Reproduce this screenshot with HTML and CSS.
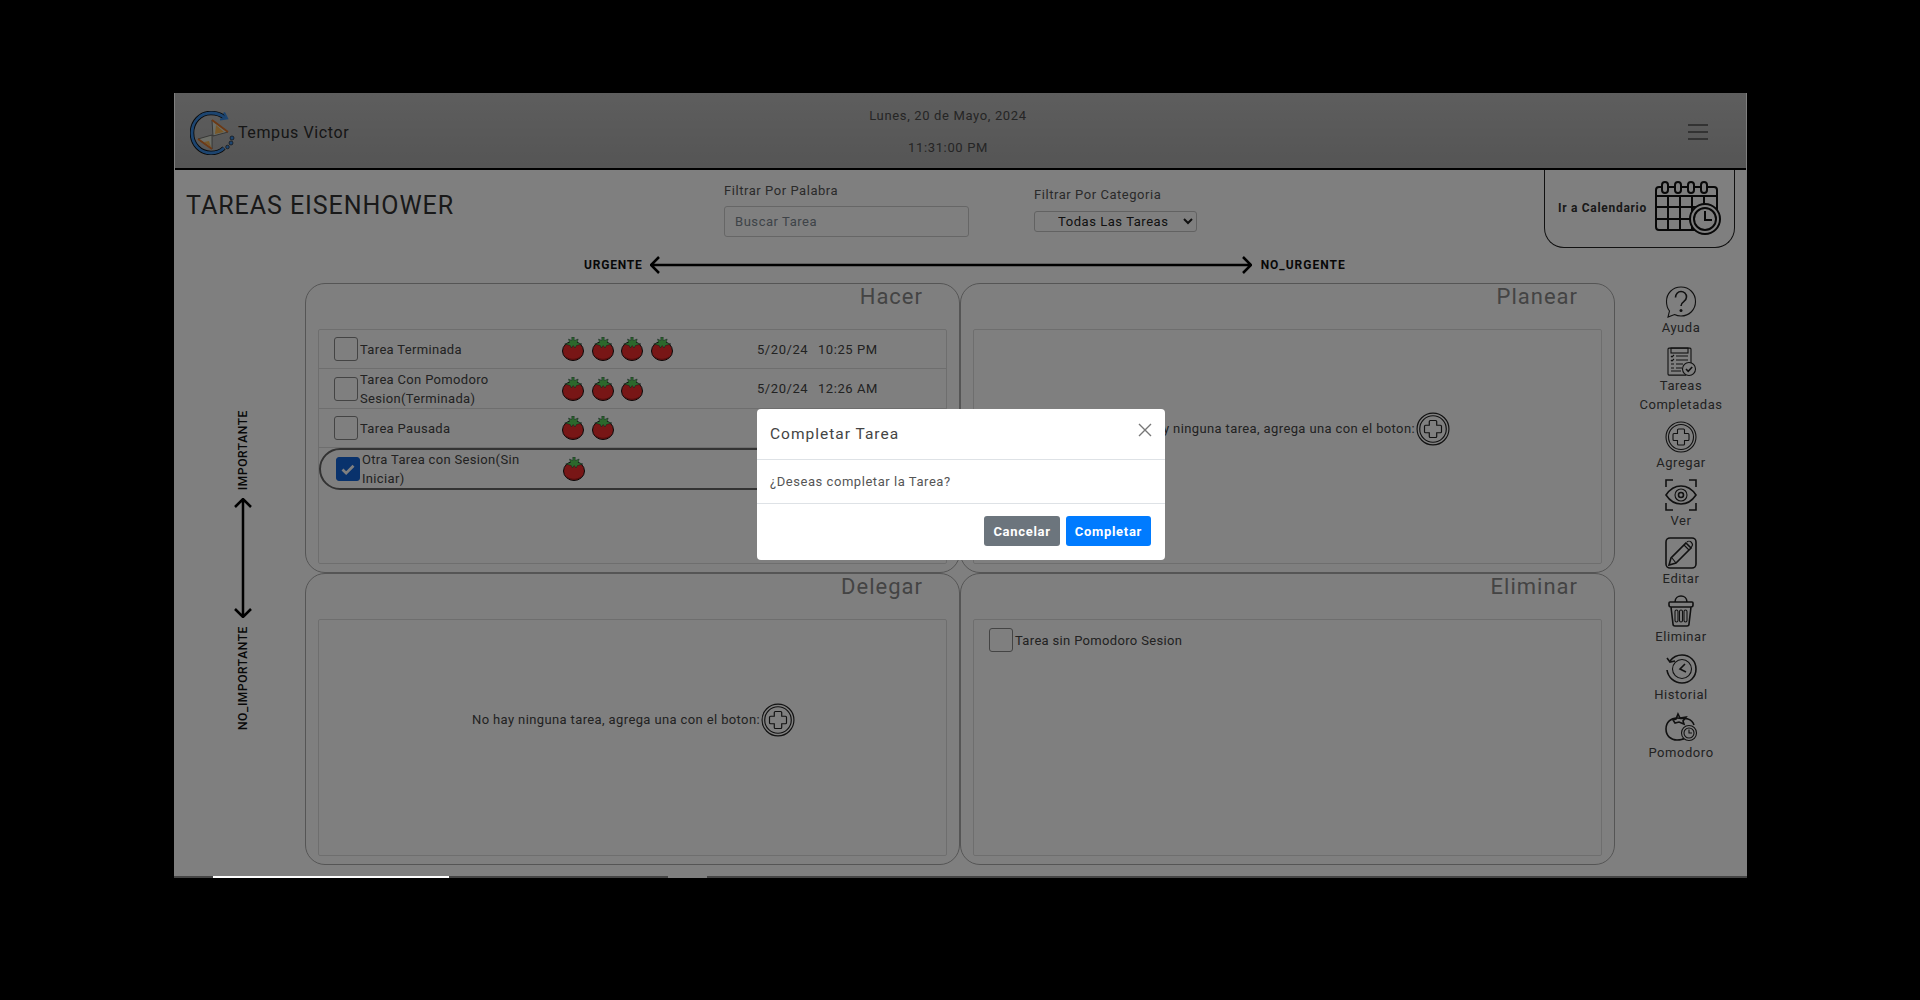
FILE: index.html
```html
<!DOCTYPE html>
<html lang="es">
<head>
<meta charset="utf-8">
<title>Tempus Victor</title>
<link rel="stylesheet" href="styles.css">
</head>
<body>

<svg class="defs" width="0" height="0">
 <symbol id="tomato" viewBox="0 0 22 24">
  <ellipse class="tomato-body" cx="11" cy="14" rx="10.500" ry="9.500"/>
  <path class="tomato-shade" d="M4 20c4 3 10 3 14 0"/>
  <path class="tomato-leaf" d="M9.800 0h2.400v3.500l4-1.500-1 3.500 4.800 1.500-5.500 1.500-1.500 2.500-1.800-2.500-1.800 2.500-1.200-2.500-5.500-1.500 4.800-1.500-1-3.500 3.300 1.500z"/>
 </symbol>
 <symbol id="add" viewBox="0 0 32 32">
  <circle cx="16" cy="16" r="15"/>
  <circle cx="16" cy="16" r="12.5"/>
  <path d="M13.5 8h5a1 1 0 0 1 1 1v3.5H23a1 1 0 0 1 1 1v5a1 1 0 0 1-1 1h-3.500V23a1 1 0 0 1-1 1h-5a1 1 0 0 1-1-1v-3.500H9a1 1 0 0 1-1-1v-5a1 1 0 0 1 1-1h3.500V9a1 1 0 0 1 1-1z"/>
 </symbol>
</svg>

<div class="app">
 <header class="topbar">
  <div class="brand">
   <svg class="logo" viewBox="0 0 46 44">
    <path class="logo-ring-line" d="M35 7C31 3.500 26 2 21 2 10 2 2 11 2 22s8 20 19 20c6 0 10-2 13-5"/>
    <path class="logo-ring" d="M35 7C31 3.500 26 2 21 2 10 2 2 11 2 22s8 20 19 20c6 0 10-2 13-5"/>
    <path class="logo-ring-head" d="M34 1.500l3 6-7 1"/>
    <path class="logo-glass" d="M22 9l16 12-15 4zM22 24L8 28l14 10z"/>
    <path class="logo-sand" d="M26 14l8 7-9 2zM14 31l5-1 2 6z"/>
    <path class="logo-frame" d="M22 9l16 12M8 28l14 10"/>
    <circle class="logo-dot" cx="42" cy="27" r="2"/>
    <circle class="logo-dot" cx="41" cy="32" r="2"/>
    <circle class="logo-dot" cx="37.500" cy="36" r="1.800"/>
   </svg>
   <span class="brand-name">Tempus Victor</span>
  </div>
  <div class="clock">
   <p>Lunes, 20 de Mayo, 2024</p>
   <p>11:31:00 PM</p>
  </div>
  <div class="menu-wrap">
   <div class="menu-btn"><span></span><span></span><span></span></div>
  </div>
 </header>

 <section class="tools">
  <h1 class="page-title">TAREAS EISENHOWER</h1>
  <div class="filter filter-word">
   <label for="buscar">Filtrar Por Palabra</label>
   <input id="buscar" type="text" placeholder="Buscar Tarea">
  </div>
  <div class="filter filter-cat">
   <label for="categoria">Filtrar Por Categoria</label>
   <select id="categoria"><option>Todas Las Tareas</option></select>
  </div>
  <a class="calendar-link">
   <span>Ir a Calendario</span>
   <svg class="calendar-icon" viewBox="0 0 66 54">
    <path d="M5 6h54a3 3 0 0 1 3 3v26M44 49H4a3 3 0 0 1-3-3V9a3 3 0 0 1 3-3h1M1 15h61M1 26h43M1 38h36M13 15v34M25 15v34M37 15v34M49 15v12"/>
    <rect class="ring" x="7" y="1" width="6" height="11" rx="3"/>
    <rect class="ring" x="20" y="1" width="6" height="11" rx="3"/>
    <rect class="ring" x="33" y="1" width="6" height="11" rx="3"/>
    <rect class="ring" x="46" y="1" width="6" height="11" rx="3"/>
    <circle class="clock-face" cx="50" cy="38" r="15"/>
    <circle cx="50" cy="38" r="11"/>
    <path d="M50 30v9h7"/>
   </svg>
  </a>
 </section>

 <div class="urgency">
  <span>URGENTE</span>
  <svg class="arrow-h" viewBox="0 0 602 18">
   <path d="M1 9h600M9 1L1 9l8 8M593 1l8 8-8 8"/>
  </svg>
  <span>NO_URGENTE</span>
 </div>

 <div class="workspace">
  <aside class="axis">
   <span class="axis-label">IMPORTANTE</span>
   <svg class="arrow-v" viewBox="0 0 18 120">
    <path d="M9 1v118M1 9l8-8 8 8M1 111l8 8 8-8"/>
   </svg>
   <span class="axis-label">NO_IMPORTANTE</span>
  </aside>

  <main class="board">
   <section class="quad">
    <h2>Hacer</h2>
    <div class="task-list">
     <div class="task">
      <div class="task-name"><input type="checkbox"><span>Tarea Terminada</span></div>
      <div class="tomatoes">
       <svg><use href="#tomato"/></svg><svg><use href="#tomato"/></svg><svg><use href="#tomato"/></svg><svg><use href="#tomato"/></svg>
      </div>
      <span>5/20/24</span><span>10:25 PM</span>
     </div>
     <div class="task">
      <div class="task-name"><input type="checkbox"><span>Tarea Con Pomodoro Sesion(Terminada)</span></div>
      <div class="tomatoes">
       <svg><use href="#tomato"/></svg><svg><use href="#tomato"/></svg><svg><use href="#tomato"/></svg>
      </div>
      <span>5/20/24</span><span>12:26 AM</span>
     </div>
     <div class="task">
      <div class="task-name"><input type="checkbox"><span>Tarea Pausada</span></div>
      <div class="tomatoes">
       <svg><use href="#tomato"/></svg><svg><use href="#tomato"/></svg>
      </div>
      <span></span><span></span>
     </div>
     <div class="task task-selected">
      <div class="task-name"><input type="checkbox" checked><span>Otra Tarea con Sesion(Sin Iniciar)</span></div>
      <div class="tomatoes">
       <svg><use href="#tomato"/></svg>
      </div>
      <span></span><span></span>
     </div>
    </div>
   </section>

   <section class="quad">
    <h2>Planear</h2>
    <div class="task-list list-empty">
     <span>No hay ninguna tarea, agrega una con el boton:</span>
     <svg class="icon empty-add"><use href="#add"/></svg>
    </div>
   </section>

   <section class="quad">
    <h2>Delegar</h2>
    <div class="task-list list-empty">
     <span>No hay ninguna tarea, agrega una con el boton:</span>
     <svg class="icon empty-add"><use href="#add"/></svg>
    </div>
   </section>

   <section class="quad">
    <h2>Eliminar</h2>
    <div class="task-list">
     <div class="task task-plain">
      <div class="task-name task-name-wide"><input type="checkbox"><span>Tarea sin Pomodoro Sesion</span></div>
     </div>
    </div>
   </section>
  </main>

  <nav class="actions">
   <a class="action">
    <svg class="icon" viewBox="0 0 32 32">
     <path d="M16 1C24.500 1 30.500 7.500 30.500 15.500S24.500 30 16 30c-2.500 0-4.500-.5-6.500-1.500L3 31l1.500-6C2.500 22.500 1.500 19 1.500 15.500 1.500 7.500 7.500 1 16 1z"/>
     <path class="thick" d="M10.500 11.500C10.500 8 13 5.500 16 5.500s5.500 2.300 5.500 5.500c0 2.500-1.500 3.700-3 4.800-1.500 1-2.500 2-2.500 4.200"/>
     <circle class="solid" cx="16" cy="24.500" r="1.500"/>
    </svg>
    <span>Ayuda</span>
   </a>
   <a class="action">
    <svg class="icon" viewBox="0 0 32 32">
     <path d="M21 26H4a1 1 0 0 1-1-1V2a1 1 0 0 1 1-1h21a1 1 0 0 1 1 1v16" transform="translate(0 3) scale(1 1.080)"/>
     <rect x="6" y="4" width="17" height="5"/>
     <path d="M6 12l1 1 2-2M11 12h12M6 16l1 1 2-2M11 16h12M6 20h3M11 20h7M6 24h3M11 24h6M6 27h10"/>
     <circle class="face" cx="24" cy="25" r="6.500"/>
     <path class="thick" d="M21 25l2.200 2.300 4-4.300"/>
    </svg>
    <span>Tareas Completadas</span>
   </a>
   <a class="action">
    <svg class="icon"><use href="#add"/></svg>
    <span>Agregar</span>
   </a>
   <a class="action">
    <svg class="icon" viewBox="0 0 32 32">
     <path class="thick" d="M1 8V1h7M24 1h7v7M31 24v7h-7M8 31H1v-7"/>
     <path class="thick" d="M1 16C5 10 10 7 16 7s11 3 15 9c-4 6-9 9-15 9S5 22 1 16z"/>
     <circle cx="16" cy="16" r="6"/>
     <circle class="thick" cx="16" cy="16" r="2.500"/>
    </svg>
    <span>Ver</span>
   </a>
   <a class="action">
    <svg class="icon" viewBox="0 0 32 32">
     <rect class="thick" x="1" y="1" width="30" height="30" rx="4"/>
     <path class="thick" d="M21 6l5 5-15 15-7 2 2-7z"/>
     <path d="M19 8l5 5M7 21l4 5M22 5c1-1 3-1 4 0s2 3 1 4l-1 2"/>
    </svg>
    <span>Editar</span>
   </a>
   <a class="action">
    <svg class="icon" viewBox="0 0 32 32">
     <path class="thick" d="M10 7c0-8 12-8 12 0M4 10V8a1 1 0 0 1 1-1h22a1 1 0 0 1 1 1v2c0 1-1 2-2 2H6c-1 0-2-1-2-2zM6 12l2 17a2 2 0 0 0 2 2h12a2 2 0 0 0 2-2l2-17"/>
     <rect x="10" y="15" width="3" height="12" rx="1.500"/>
     <rect x="14.500" y="15" width="3" height="12" rx="1.500"/>
     <rect x="19" y="15" width="3" height="12" rx="1.500"/>
    </svg>
    <span>Eliminar</span>
   </a>
   <a class="action">
    <svg class="icon" viewBox="0 0 32 32">
     <path class="thick" d="M5 8c3-4 7-6 12-6 8 0 14 6 14 14s-6 14-14 14C9 30 3 24 2 17"/>
     <path class="thick" d="M2 5l3 4 5-1"/>
     <circle cx="17" cy="16" r="9.500"/>
     <path class="thick" d="M20 11l-5 5 6 3"/>
    </svg>
    <span>Historial</span>
   </a>
   <a class="action">
    <svg class="icon" viewBox="0 0 32 32">
     <path class="thick" d="M20 27c-2 1.500-5 2-8 2C6 29 1 25 1 18S6 7 12 7c2 0 3 .5 4 .5S21 7 23 8c3 1 5 3 6 6"/>
     <path class="thick" d="M8 9l3-1 2-5 2 4 6-1-3 4 1 3-5-2-4 1z"/>
     <circle class="face" cx="24" cy="22" r="7.500"/>
     <circle cx="24" cy="22" r="5"/>
     <path d="M24 18.500V22h3"/>
    </svg>
    <span>Pomodoro</span>
   </a>
  </nav>
 </div>

 <div class="scrollstrip">
  <span class="seg seg-a"></span><span class="seg seg-b"></span><span class="seg seg-c"></span><span class="seg seg-d"></span><span class="seg seg-e"></span>
 </div>
</div>

<div class="backdrop"></div>

<div class="modal">
 <div class="modal-head">
  <h3>Completar Tarea</h3>
  <svg class="modal-close" viewBox="0 0 14 14"><path d="M1 1l12 12M13 1L1 13"/></svg>
 </div>
 <div class="modal-body">¿Deseas completar la Tarea?</div>
 <div class="modal-foot">
  <button class="btn btn-gray">Cancelar</button>
  <button class="btn btn-blue">Completar</button>
 </div>
</div>

</body>
</html>
```
FILE: styles.css
```css
* { box-sizing: border-box; }
html, body { height: 100%; }
body {
 margin: 0;
 padding: 93px 173px 0 174px;
 overflow: hidden;
 background: #000;
 font-family: Roboto, "Liberation Sans", sans-serif;
 font-size: 13px;
 letter-spacing: .55px;
 color: #444;
}
p, h1, h2, h3 { margin: 0; font-weight: 400; }
.defs { position: absolute; }

.app { width: 1573px; background: #fff; }

/* cabecera */
.topbar {
 display: grid;
 grid-template-columns: 645px 226px 1fr;
 align-items: center;
 height: 77px;
 margin-left: 1px;
 margin-right: 1px;
 padding: 2px 0 0 15px;
 background: linear-gradient(#bcbcbc, #aaa);
 border-bottom: 2px solid #000;
}
.brand { display: flex; align-items: center; gap: 2px; margin-top: 2px; }
.logo { width: 46px; height: 44px; fill: none; }
.logo-ring-line { stroke: #111; stroke-width: 4.500; }
.logo-ring { stroke: #3a8ae0; stroke-width: 2.800; }
.logo-ring-head { stroke: #3a8ae0; stroke-width: 2.200; }
.logo-glass { fill: #d8ddd0; stroke: #333; stroke-width: .6; }
.logo-sand { fill: #f0b050; }
.logo-frame { stroke: #d9722a; stroke-width: 2; }
.logo-dot { fill: #3a8ae0; stroke: #111; stroke-width: .6; }
.brand-name { font-size: 16px; letter-spacing: .6px; color: #2c2c2c; }
.clock { text-align: center; letter-spacing: .65px; color: #4a4a4a; }
.clock p { line-height: 19px; }
.clock p + p { margin-top: 13px; }
.menu-wrap { display: flex; justify-content: flex-end; padding-right: 38px; }
.menu-btn { display: flex; flex-direction: column; gap: 5px; width: 20px; }
.menu-btn span { height: 2px; background: #666; }

/* filtros */
.tools {
 display: grid;
 grid-template-columns: 550px 310px 510px 191px;
 height: 78px;
}
.page-title {
 padding: 21px 0 0 12px;
 font-size: 25px;
 line-height: 30px;
 letter-spacing: .95px;
 color: #333;
}
.filter label { display: block; line-height: 19px; color: #555; }
.filter-word { padding-top: 11px; }
.filter-word label { margin-bottom: 6px; }
.filter-word input {
 display: block;
 width: 245px;
 height: 31px;
 padding: 0 10px;
 border: 1px solid #ccc;
 border-radius: 3px;
 background: #fff;
 font: inherit;
 letter-spacing: inherit;
 color: #444;
}
.filter-word input::placeholder { color: #7d8791; opacity: 1; }
.filter-cat { padding-top: 15px; }
.filter-cat label { margin-bottom: 7px; }
.filter-cat select {
 display: block;
 width: 163px;
 height: 21px;
 padding: 0 0 0 19px;
 border: 1px solid #c4c4c4;
 border-radius: 3px;
 background: #fff;
 font: inherit;
 letter-spacing: inherit;
 color: #222;
}
.calendar-link {
 display: flex;
 align-items: center;
 gap: 8px;
 height: 78px;
 padding: 0 0 2px 13px;
 border: 1px solid #222;
 border-top: 0;
 border-radius: 0 0 20px 20px;
 font-size: 12px;
 font-weight: 700;
 letter-spacing: .7px;
 color: #333;
 white-space: nowrap;
}
.calendar-icon { width: 66px; height: 54px; fill: none; stroke: #111; stroke-width: 2; }
.calendar-icon .ring { fill: #fff; }
.calendar-icon .clock-face { fill: #fff; }

/* ejes */
.urgency {
 display: flex;
 align-items: center;
 gap: 7px;
 height: 35px;
 padding: 0 0 2px 410px;
 font-size: 12px;
 font-weight: 700;
 letter-spacing: .8px;
 color: #111;
}
.urgency span:last-child { margin-left: 2px; letter-spacing: 1px; }
.arrow-h { width: 602px; height: 18px; fill: none; stroke: #000; stroke-width: 2.500; }
.workspace { display: flex; }
.axis {
 display: flex;
 flex-direction: column;
 align-items: center;
 gap: 8px;
 width: 131px;
 padding: 127px 0 0 6px;
}
.axis-label {
 writing-mode: vertical-rl;
 transform: rotate(180deg);
 font-size: 12px;
 font-weight: 500;
 letter-spacing: .6px;
 line-height: 14px;
 color: #111;
}
.arrow-v { width: 18px; height: 120px; fill: none; stroke: #000; stroke-width: 2.500; }

/* matriz */
.board {
 display: grid;
 grid-template-columns: 655px 655px;
 grid-template-rows: 290px 292px;
 width: 1310px;
 margin-bottom: 11px;
}
.quad {
 display: flex;
 flex-direction: column;
 padding: 0 12px 8px;
 border: 1px solid #aaa;
 border-radius: 20px;
}
.quad h2 {
 height: 45px;
 padding: 0 24px 0 0;
 font-size: 22px;
 line-height: 26px;
 letter-spacing: 1px;
 text-align: right;
 color: #888;
}
.task-list { flex: 1; border: 1px solid #ddd; border-radius: 2px; }
.list-empty {
 display: flex;
 align-items: center;
 justify-content: center;
 gap: 1px;
 padding: 0 0 36px 2px;
 letter-spacing: .38px;
 color: #444;
}
.icon { display: block; width: 32px; height: 32px; fill: none; stroke: #222; stroke-width: 1.100; overflow: visible; }
.icon .thick { stroke-width: 1.600; }
.icon .solid { fill: #222; stroke: none; }
.icon .face { fill: #fff; }
.empty-add { width: 34px; height: 34px; }

.task {
 display: grid;
 grid-template-columns: 228px 195px 61px 1fr;
 align-items: center;
 min-height: 39px;
 padding-left: 15px;
 border-bottom: 1px solid #ddd;
 line-height: 19px;
}
.task:nth-child(2) { min-height: 40px; }
.task-selected {
 min-height: 41px;
 padding-left: 15px;
 border: 2px solid #666;
 border-radius: 21px;
 grid-template-columns: 227px 195px 61px 1fr;
}
.task-plain { border-bottom: 0; grid-template-columns: 1fr; padding-left: 15px; padding-top: 8px; padding-bottom: 8px; min-height: 0; }
.task-name { display: flex; align-items: center; gap: 2px; max-width: 195px; letter-spacing: .33px; }
.task-name span { max-width: 170px; }
.task-name-wide { max-width: none; }
.task-name-wide span { max-width: none; }
.task-name input {
 appearance: none;
 flex: none;
 width: 24px;
 height: 24px;
 margin: 0;
 border: 1px solid #888;
 border-radius: 3px;
 background: #fff;
}
.task-name input:checked {
 border-color: #1264d8;
 background-color: #1264d8;
 background-image: url("data:image/svg+xml,%3Csvg xmlns='http://www.w3.org/2000/svg' viewBox='0 0 24 24'%3E%3Cpath d='M6 12.500l4 4 8-8' fill='none' stroke='%23fff' stroke-width='3'/%3E%3C/svg%3E");
}
.tomatoes { display: flex; gap: 7.500px; }
.tomatoes svg { width: 22px; height: 24px; }
.tomato-body { fill: #f02c2c; stroke: #111; stroke-width: 1; }
.tomato-shade { fill: none; stroke: #a01818; stroke-width: 1; }
.tomato-leaf { fill: #58d058; stroke: #123; stroke-width: .4; }

/* barra lateral */
.actions {
 display: flex;
 flex-direction: column;
 align-items: center;
 gap: 7px;
 width: 132px;
 padding-top: 3px;
}
.action {
 display: flex;
 flex-direction: column;
 align-items: center;
 width: 100px;
 line-height: 19px;
 text-align: center;
 color: #444;
}

.scrollstrip { display: flex; height: 2px; }
.seg { height: 2px; background: #888; }
.seg-a { width: 39px; }
.seg-b { width: 236px; background: #fff; position: relative; z-index: 2; }
.seg-c { width: 219px; }
.seg-d { width: 39px; background: #fff; }
.seg-e { flex: 1; }

/* modal */
.backdrop { position: fixed; inset: 0; background: rgba(0, 0, 0, .5); }
.modal {
 position: fixed;
 left: 757px;
 top: 409px;
 width: 408px;
 height: 151px;
 background: #fff;
 border-radius: 4px;
 color: #444;
}
.modal-head {
 display: flex;
 align-items: center;
 justify-content: space-between;
 height: 51px;
 padding: 0 13px;
 border-bottom: 1px solid #dee2e6;
}
.modal-head h3 { font-size: 15.500px; letter-spacing: 1px; color: #444; }
.modal-close { width: 14px; height: 14px; margin-top: -8px; fill: none; stroke: #777; stroke-width: 1.400; }
.modal-body {
 display: flex;
 align-items: center;
 height: 44px;
 padding: 0 13px;
 border-bottom: 1px solid #dee2e6;
 color: #555;
}
.modal-foot { display: flex; justify-content: flex-end; gap: 6px; padding: 12px 14px 0; }
.btn {
 height: 30px;
 padding: 0 9px;
 border: 0;
 border-radius: 3px;
 font: inherit;
 font-weight: 700;
 letter-spacing: .7px;
 color: #fff;
}
.btn-gray { background: #6c757d; }
.btn-blue { background: #007bff; }
```
